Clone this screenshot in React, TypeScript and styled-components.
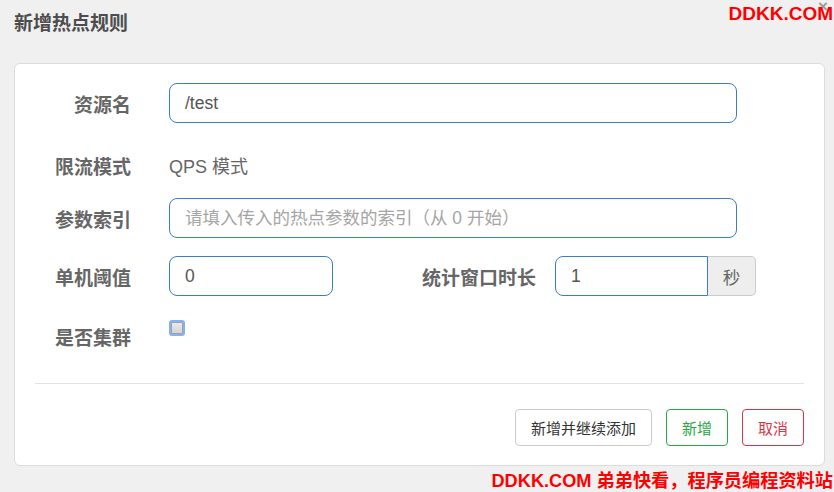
import styled, { createGlobalStyle } from 'styled-components';

const Global = createGlobalStyle`
  html, body {
    margin: 0;
    padding: 0;
    background: #f0f0f0;
  }
  body {
    font-family: "Liberation Sans", "Noto Sans CJK SC", sans-serif;
  }
`;

const Page = styled.div`
  position: relative;
  width: 834px;
  height: 492px;
  overflow: hidden;
  box-sizing: border-box;
  padding: 0 9px 0 14px;
`;

const Title = styled.h4`
  margin: 0;
  height: 63px;
  line-height: 48px;
  font-size: 19px;
  font-weight: bold;
  color: #4d4d4d;
`;

const Close = styled.span`
  position: absolute;
  top: 0;
  right: 6px;
  font-size: 17px;
  line-height: 14px;
  font-weight: bold;
  color: #9a9a9a;
`;

const Mark = styled.div<{ bottom?: boolean }>`
  position: absolute;
  right: 1px;
  ${({ bottom }) => (bottom ? 'bottom: 0px; font-size: 18.2px;' : 'top: 3px; font-size: 19px;')}
  font-weight: bold;
  line-height: 22px;
  color: #ff0000;
  white-space: nowrap;
`;

const Card = styled.div`
  background: #fff;
  border: 1px solid #dcdcdc;
  border-radius: 6px;
  padding: 19px 20px 19px 0;
`;

const Row = styled.div<{ space: number }>`
  display: flex;
  align-items: center;
  min-height: 40px;
  margin-bottom: ${({ space }) => space}px;
`;

const Label = styled.label<{ width?: number; gap?: number }>`
  flex: none;
  width: ${({ width }) => width ?? 116}px;
  margin-right: ${({ gap }) => gap ?? 38}px;
  text-align: right;
  font-size: 19px;
  font-weight: bold;
  color: #666;
`;

const Input = styled.input<{ width: number; joined?: boolean }>`
  box-sizing: border-box;
  width: ${({ width }) => width}px;
  height: 40px;
  padding: 0 15px;
  font-family: inherit;
  font-size: 17.5px;
  color: #555;
  background: #fff;
  border: 1px solid #3a7dc2;
  border-radius: ${({ joined }) => (joined ? '8px 0 0 8px' : '8px')};
  outline: none;
  &::placeholder {
    color: #a5a5a5;
  }
`;

const Static = styled.span`
  font-size: 18px;
  color: #666;
`;

const Group = styled.div`
  display: flex;
`;

const Addon = styled.span`
  box-sizing: border-box;
  width: 48px;
  height: 40px;
  display: flex;
  align-items: center;
  justify-content: center;
  font-size: 17.5px;
  color: #666;
  background: #eee;
  border: 1px solid #ccc;
  border-left: none;
  border-radius: 0 5px 5px 0;
`;

const Check = styled.span`
  align-self: flex-start;
  margin-top: 4px;
  box-sizing: border-box;
  width: 16px;
  height: 16px;
  border: 2px solid #86b0f7;
  border-radius: 3px;
  background: linear-gradient(#ececec, #d2d2d2);
  box-shadow: inset 0 0 0 1px #a0a0a0;
`;

const Divider = styled.hr`
  margin: 27px 0 25px 20px;
  border: none;
  border-top: 1px solid #e2e2e2;
`;

const Actions = styled.div`
  display: flex;
  justify-content: flex-end;
  gap: 14px;
`;

const Button = styled.button<{ tone?: 'green' | 'red' }>`
  height: 37px;
  padding: 0 15px;
  font-family: inherit;
  font-size: 15px;
  background: #fff;
  border-radius: 4px;
  border: 1px solid
    ${({ tone }) => (tone === 'green' ? '#28a745' : tone === 'red' ? '#dc3545' : '#ccc')};
  color: ${({ tone }) => (tone === 'green' ? '#28a745' : tone === 'red' ? '#dc3545' : '#333')};
`;

export default function App() {
  return (
    <Page>
      <Global />
      <Title>新增热点规则</Title>
      <Card>
        <Row space={22}>
          <Label>资源名</Label>
          <Input width={568} defaultValue="/test" />
        </Row>
        <Row space={13}>
          <Label>限流模式</Label>
          <Static>QPS 模式</Static>
        </Row>
        <Row space={18}>
          <Label>参数索引</Label>
          <Input width={568} placeholder="请填入传入的热点参数的索引（从 0 开始）" />
        </Row>
        <Row space={20}>
          <Label>单机阈值</Label>
          <Input width={164} defaultValue="0" />
          <Label width={203} gap={19}>
            统计窗口时长
          </Label>
          <Group>
            <Input width={153} joined defaultValue="1" />
            <Addon>秒</Addon>
          </Group>
        </Row>
        <Row space={0}>
          <Label>是否集群</Label>
          <Check />
        </Row>
        <Divider />
        <Actions>
          <Button>新增并继续添加</Button>
          <Button tone="green">新增</Button>
          <Button tone="red">取消</Button>
        </Actions>
      </Card>
      <Close>×</Close>
      <Mark>DDKK.COM</Mark>
      <Mark bottom>DDKK.COM 弟弟快看，程序员编程资料站</Mark>
    </Page>
  );
}
